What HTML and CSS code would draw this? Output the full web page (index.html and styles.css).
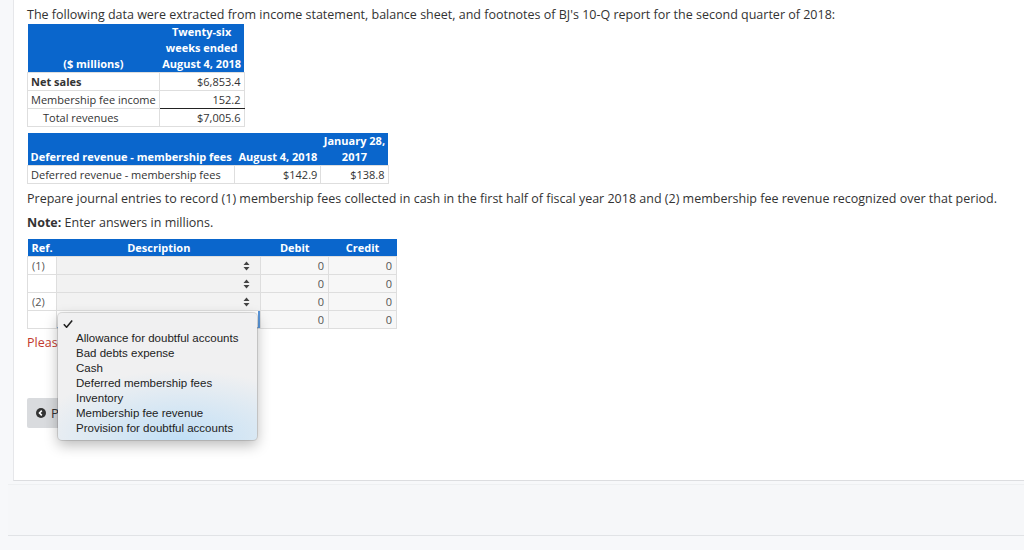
FILE: index.html
```html
<!DOCTYPE html>
<html>
<head>
<meta charset="utf-8">
<link rel="stylesheet" href="styles.css">
</head>
<body>
<div class="panel">
  <p class="intro">The following data were extracted from income statement, balance sheet, and footnotes of BJ's 10-Q report for the second quarter of 2018:</p>
  <table class="data t1">
    <thead>
      <tr><th class="lbl">($ millions)</th><th>Twenty-six<br>weeks ended<br>August 4, 2018</th></tr>
    </thead>
    <tbody>
      <tr><td class="b">Net sales</td><td class="num">$6,853.4</td></tr>
      <tr><td>Membership fee income</td><td class="num under">152.2</td></tr>
      <tr><td class="ind">Total revenues</td><td class="num">$7,005.6</td></tr>
    </tbody>
  </table>
  <table class="data t2">
    <thead>
      <tr><th class="lft">Deferred revenue - membership fees</th><th>August 4, 2018</th><th>January 28,<br>2017</th></tr>
    </thead>
    <tbody>
      <tr><td>Deferred revenue - membership fees</td><td class="num">$142.9</td><td class="num">$138.8</td></tr>
    </tbody>
  </table>
  <p class="q">Prepare journal entries to record (1) membership fees collected in cash in the first half of fiscal year 2018 and (2) membership fee revenue recognized over that period.</p>
  <p class="q note"><b>Note:</b> Enter answers in millions.</p>
  <div class="jwrap">
    <table class="journal">
      <thead>
        <tr><th class="ref">Ref.</th><th class="desc">Description</th><th class="amt">Debit</th><th class="amt">Credit</th></tr>
      </thead>
      <tbody>
        <tr><td class="ref">(1)</td><td class="desc"><span class="sel"><svg class="arr" width="7" height="10" viewBox="0 0 7 10"><path d="M3.5 0.5 L6.5 4 H0.5 Z M3.5 9.5 L0.5 6 H6.5 Z"/></svg></span></td><td class="amt">0</td><td class="amt">0</td></tr>
        <tr><td class="ref"></td><td class="desc"><span class="sel"><svg class="arr" width="7" height="10" viewBox="0 0 7 10"><path d="M3.5 0.5 L6.5 4 H0.5 Z M3.5 9.5 L0.5 6 H6.5 Z"/></svg></span></td><td class="amt">0</td><td class="amt">0</td></tr>
        <tr><td class="ref">(2)</td><td class="desc"><span class="sel"><svg class="arr" width="7" height="10" viewBox="0 0 7 10"><path d="M3.5 0.5 L6.5 4 H0.5 Z M3.5 9.5 L0.5 6 H6.5 Z"/></svg></span></td><td class="amt">0</td><td class="amt">0</td></tr>
        <tr><td class="ref"></td><td class="desc focus"><span class="sel"></span></td><td class="amt">0</td><td class="amt">0</td></tr>
      </tbody>
    </table>
    <div class="popup">
      <div class="opt checked"><svg class="check" width="10" height="8" viewBox="0 0 10 8"><path d="M0.8 4.2 L3.6 7.2 L9.2 0.6"/></svg></div>
      <div class="opt">Allowance for doubtful accounts</div>
      <div class="opt">Bad debts expense</div>
      <div class="opt">Cash</div>
      <div class="opt">Deferred membership fees</div>
      <div class="opt">Inventory</div>
      <div class="opt">Membership fee revenue</div>
      <div class="opt">Provision for doubtful accounts</div>
    </div>
  </div>
  <p class="err">Please answer all parts.</p>
  <button class="prev"><svg class="picon" width="10" height="10" viewBox="0 0 10 10"><circle cx="5" cy="5" r="5"/><path d="M5.8 2.6 L3.5 5 L5.8 7.4" /></svg><span>Prev</span></button>
</div>
<div class="footer"></div>
</body>
</html>
```

FILE: styles.css
```css
html, body {
  margin: 0;
  padding: 0;
}
body {
  background: #f7f8fa;
  font-family: "Open Sans", "Liberation Sans", sans-serif;
  color: #333;
  width: 1024px;
  height: 550px;
  overflow: hidden;
}
.panel {
  margin-left: 13px;
  height: 481px;
  box-sizing: border-box;
  background: #fff;
  border-left: 1px solid #e6e7ea;
  border-bottom: 1px solid #dcdde0;
  padding: 6px 0 0 13px;
}
.intro {
  margin: 0;
  font-size: 12.5px;
  line-height: 18px;
}
table.data {
  border-collapse: collapse;
  font-size: 11px;
  color: #333;
}
table.data th {
  background: #0a66cc;
  color: #fff;
  font-weight: 700;
  line-height: 16px;
  padding: 0 3px;
  vertical-align: bottom;
  text-align: center;
  white-space: nowrap;
}
table.data td {
  border: 1px solid #dedede;
  line-height: 17px;
  padding: 0 3px;
  white-space: nowrap;
}
table.data td.num {
  text-align: right;
}
table.data td.b {
  font-weight: 700;
}
table.data td.ind {
  padding-left: 15px;
}
table.data td.under {
  border-bottom: 1px solid #222;
}
.t1 th.lbl {
  width: 124px;
}
.t1 th {
  width: 78px;
}
.t2 {
  margin-top: 6px;
}
.t2 th.lft {
  text-align: left;
  width: 197px;
}
.t2 th:nth-child(2) {
  width: 80px;
}
.t2 th:nth-child(3) {
  width: 60px;
}
.t2 th {
  padding-top: 1px;
}
.q {
  margin: 6px 0 0;
  font-size: 12.5px;
  line-height: 18px;
  white-space: nowrap;
}
.note {
  margin-top: 6px;
}
.jwrap {
  position: relative;
  margin-top: 7px;
  width: 370px;
}
table.journal {
  border-collapse: collapse;
  font-size: 11px;
}
table.journal th {
  background: #0a66cc;
  color: #fff;
  font-weight: 700;
  line-height: 17px;
  padding: 0 4px;
  text-align: center;
}
table.journal th.ref {
  text-align: left;
  width: 20px;
}
table.journal th.desc {
  width: 197px;
}
table.journal th.amt {
  width: 60px;
}
table.journal td {
  border: 1px solid #dedede;
  height: 17px;
  padding: 0 4px;
  line-height: 17px;
  color: #555;
}
table.journal td.ref {
  background: #fff;
}
table.journal td.desc {
  background: #f2f2f2;
  padding: 0;
}
table.journal td.amt {
  background: #f7f7f7;
  text-align: right;
}
.sel {
  display: flex;
  justify-content: flex-end;
  align-items: center;
  height: 17px;
  padding-right: 10px;
}
.arr path {
  fill: #444;
}
table.journal td.desc.focus {
  background: #fff;
  box-shadow: inset -2px 0 0 #5b96d8, inset 0 -1px 0 #9cc0ea;
}
.popup {
  position: absolute;
  left: 31px;
  top: 74px;
  width: 199px;
  box-sizing: border-box;
  padding: 3px 0 4px;
  border-radius: 4px;
  background:
    radial-gradient(ellipse 150px 70px at 62% 100%, rgba(190, 222, 246, 0.95), rgba(230, 238, 245, 0) 100%),
    #f0f0f1;
  box-shadow: 0 0 0 1px rgba(0, 0, 0, 0.12), 0 5px 14px rgba(0, 0, 0, 0.28);
  font-family: "Liberation Sans", Arial, sans-serif;
  font-size: 11.5px;
  color: #222;
}
.opt {
  height: 15px;
  line-height: 15px;
  padding-left: 18px;
  white-space: nowrap;
}
.opt.checked {
  padding-left: 5px;
  display: flex;
  align-items: center;
}
.check path {
  fill: none;
  stroke: #222;
  stroke-width: 1.6;
}
.err {
  margin: 5px 0 0;
  font-size: 12.5px;
  line-height: 18px;
  color: #c23a2e;
}
.prev {
  margin-top: 46px;
  height: 30px;
  border: 0;
  border-radius: 2px;
  background: #d9dbde;
  padding: 0 12px 0 9px;
  display: flex;
  align-items: center;
  gap: 5px;
  font-family: "Open Sans", "Liberation Sans", sans-serif;
  font-size: 13px;
  color: #333;
}
.picon circle {
  fill: #333;
}
.picon path {
  fill: none;
  stroke: #fff;
  stroke-width: 1.6;
}
.footer {
  margin-top: 3px;
  margin-left: 8px;
  height: 50px;
  border-top: 1px solid #eef0f2;
  border-bottom: 1px solid #e1e3e6;
  background: #f6f7f9;
}
```
